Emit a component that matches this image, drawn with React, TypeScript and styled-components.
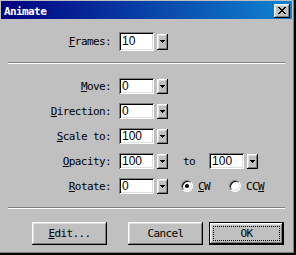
import React from 'react'
import styled, { createGlobalStyle, css } from 'styled-components'

const colors = {
  face: '#c0c0c0',
  light: '#dfdfdf',
  white: '#ffffff',
  shadow: '#808080',
  dark: '#000000'
}

const GlobalStyle = createGlobalStyle`
  html, body {
    margin: 0;
    padding: 0;
    background: ${colors.face};
  }
  body {
    font-family: 'DejaVu Sans Mono', 'Liberation Mono', monospace;
  }
`

const raised = css`
  background: ${colors.face};
  box-shadow: inset -1px -1px 0 ${colors.dark}, inset 1px 1px 0 ${colors.white},
    inset -2px -2px 0 ${colors.shadow}, inset 2px 2px 0 ${colors.light};
`

const Window = styled.div`
  box-sizing: border-box;
  width: 296px;
  height: 255px;
  padding: 1px 4px 4px 1px;
  background: ${colors.face};
  box-shadow: inset -2px -2px 0 ${colors.dark}, inset -3px -3px 0 ${colors.shadow};
  display: flex;
  flex-direction: column;
`
const TitleBar = styled.div`
  height: 18px;
  flex: none;
  display: flex;
  align-items: center;
  justify-content: space-between;
  padding: 0 2px 0 3px;
  background: linear-gradient(to right, #000080, #1084d0);
`
const TitleText = styled.span`
  color: ${colors.white};
  font-weight: bold;
  font-size: 11px;
  letter-spacing: -0.6px;
  margin-top: 2px;
`
const CloseButton = styled.div`
  ${raised};
  width: 16px;
  height: 14px;
  margin-top: 1px;
  display: flex;
  align-items: center;
  justify-content: center;
`
const Label = styled.span`
  width: 110px;
  flex: none;
  text-align: right;
  font-size: 11px;
  letter-spacing: -0.6px;
  color: ${colors.dark};
`
const Row = styled.div<{ $tall?: boolean }>`
  display: flex;
  align-items: center;
  height: ${p => (p.$tall ? 19 : 16)}px;
`
const FramesRow = styled(Row)`
  margin-top: 13px;
`
const Rows = styled.div`
  display: flex;
  flex-direction: column;
  gap: 9px;
  margin-top: 14px;
`
const Separator = styled.div<{ $top: number }>`
  height: 0;
  margin: ${p => p.$top}px 7px 0 7px;
  border-top: 1px solid ${colors.shadow};
  border-bottom: 1px solid ${colors.white};
`
const Combo = styled.div<{ $left: number }>`
  display: flex;
  align-items: center;
  gap: 3px;
  margin-left: ${p => p.$left}px;
`
const Field = styled.div<{ $tall?: boolean }>`
  box-sizing: border-box;
  width: 35px;
  height: ${p => (p.$tall ? 19 : 16)}px;
  padding-left: 3px;
  background: ${colors.white};
  box-shadow: inset 1px 1px 0 ${colors.shadow}, inset -1px -1px 0 ${colors.white},
    inset 2px 2px 0 ${colors.dark}, inset -2px -2px 0 ${colors.light};
  font-family: 'Liberation Sans', Arial, sans-serif;
  font-size: 12px;
  line-height: ${p => (p.$tall ? 19 : 16)}px;
  color: ${colors.dark};
`
const DropButton = styled.div<{ $tall?: boolean }>`
  ${raised};
  width: 11px;
  height: ${p => (p.$tall ? 16 : 15)}px;
  display: flex;
  align-items: center;
  justify-content: center;
`
const Word = styled.span<{ $left: number }>`
  margin-left: ${p => p.$left}px;
  font-size: 11px;
  letter-spacing: -0.6px;
  color: ${colors.dark};
`
const RadioCircle = styled.span<{ $checked?: boolean; $left: number }>`
  box-sizing: border-box;
  position: relative;
  width: 12px;
  height: 12px;
  margin-left: ${p => p.$left}px;
  border-radius: 50%;
  background: ${colors.white};
  border: 1px solid;
  border-color: ${colors.shadow} ${colors.white} ${colors.white} ${colors.shadow};
  box-shadow: inset 1px 1px 0 ${colors.dark}, inset -1px -1px 0 ${colors.light};
  &::after {
    content: '';
    display: ${p => (p.$checked ? 'block' : 'none')};
    position: absolute;
    left: 3px;
    top: 3px;
    width: 4px;
    height: 4px;
    border-radius: 50%;
    background: ${colors.dark};
  }
`
const ButtonBar = styled.div`
  display: flex;
  align-items: center;
  margin: 13px 0 0 31px;
`
const Button = styled.div<{ $default?: boolean; $left: number }>`
  ${raised};
  box-sizing: border-box;
  position: relative;
  width: 75px;
  height: 23px;
  margin-left: ${p => p.$left}px;
  display: flex;
  align-items: center;
  justify-content: center;
  font-size: 11px;
  letter-spacing: -0.6px;
  color: ${colors.dark};
  ${p =>
    p.$default &&
    css`
      border: 1px solid ${colors.dark};
      &::after {
        content: '';
        position: absolute;
        inset: 3px;
        border: 1px dotted ${colors.dark};
      }
    `}
`

const CloseGlyph = () => {
  const rows = ['11000011', '01100110', '00111100', '00011000', '00111100', '01100110', '11000011']
  return (
    <svg width="8" height="7" viewBox="0 0 8 7" shapeRendering="crispEdges">
      {rows.map((r, y) =>
        r.split('').map((c, x) => (c === '1' ? <rect key={`${x}-${y}`} x={x} y={y} width="1" height="1" fill="#000" /> : null))
      )}
    </svg>
  )
}

const Arrow = () => (
  <svg width="5" height="3" viewBox="0 0 5 3" shapeRendering="crispEdges">
    <rect x="0" y="0" width="5" height="1" fill="#000" />
    <rect x="1" y="1" width="3" height="1" fill="#000" />
    <rect x="2" y="2" width="1" height="1" fill="#000" />
  </svg>
)

const DropField: React.FC<{ value: string; left: number; tall?: boolean }> = ({ value, left, tall }) => (
  <Combo $left={left}>
    <Field $tall={tall}>{value}</Field>
    <DropButton $tall={tall}>
      <Arrow />
    </DropButton>
  </Combo>
)

const App: React.FC = () => (
  <>
    <GlobalStyle />
    <Window>
      <TitleBar>
        <TitleText>Animate</TitleText>
        <CloseButton>
          <CloseGlyph />
        </CloseButton>
      </TitleBar>

      <FramesRow $tall>
        <Label>
          <u>F</u>rames:
        </Label>
        <DropField value="10" left={8} tall />
      </FramesRow>

      <Separator $top={11} />

      <Rows>
        <Row>
          <Label>
            <u>M</u>ove:
          </Label>
          <DropField value="0" left={8} />
        </Row>
        <Row>
          <Label>
            <u>D</u>irection:
          </Label>
          <DropField value="0" left={8} />
        </Row>
        <Row>
          <Label>
            <u>S</u>cale to:
          </Label>
          <DropField value="100" left={8} />
        </Row>
        <Row>
          <Label>
            <u>O</u>pacity:
          </Label>
          <DropField value="100" left={8} />
          <Word $left={15}>to</Word>
          <DropField value="100" left={14} />
        </Row>
        <Row>
          <Label>
            <u>R</u>otate:
          </Label>
          <DropField value="0" left={8} />
          <RadioCircle $checked $left={13} />
          <Word $left={5}>
            <u>C</u>W
          </Word>
          <RadioCircle $left={19} />
          <Word $left={5}>
            CC<u>W</u>
          </Word>
        </Row>
      </Rows>

      <Separator $top={13} />

      <ButtonBar>
        <Button $left={0}>
          <span>
            <u>E</u>dit...
          </span>
        </Button>
        <Button $left={21}>Cancel</Button>
        <Button $left={6} $default>
          OK
        </Button>
      </ButtonBar>
    </Window>
  </>
)

export default App
